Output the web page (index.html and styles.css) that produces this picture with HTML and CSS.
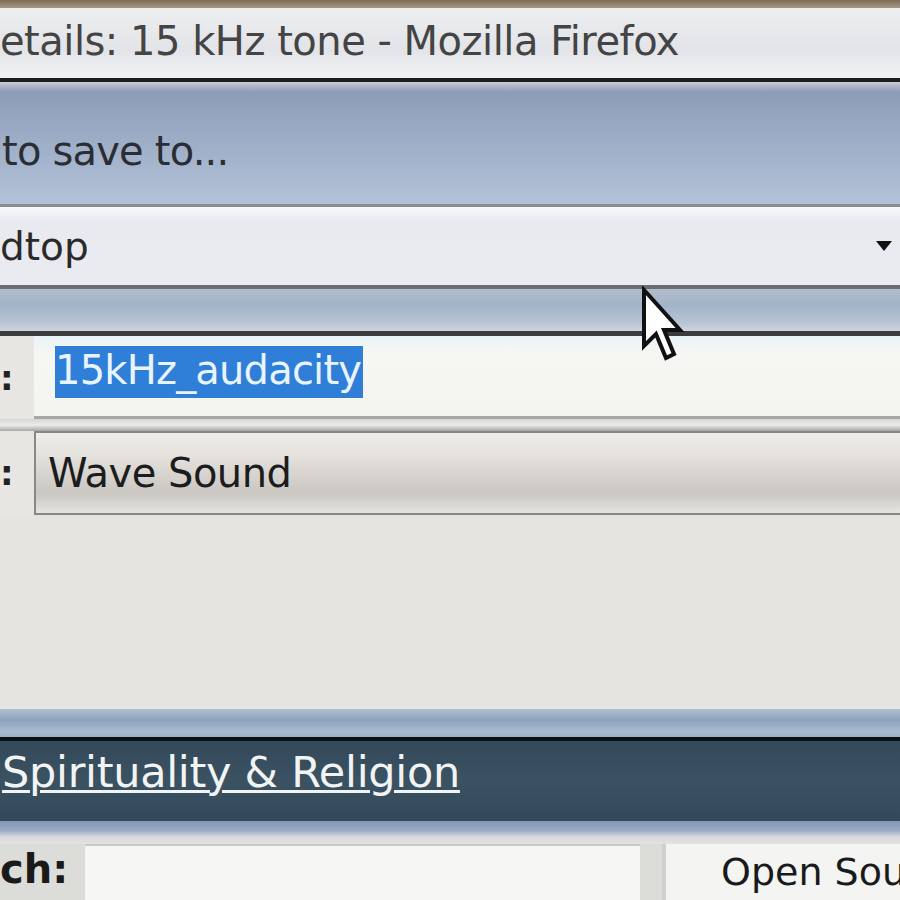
FILE: index.html
```html
<!DOCTYPE html>
<html lang="en">

<head>
    <meta charset="UTF-8">
    <meta name="viewport" content="width=device-width, initial-scale=1.0">
    <title>Save dialog</title>

    <link rel="stylesheet" href="styles.css">
</head>

<body>
    <div id="screen">
        <div class="top-edge"></div>

        <div class="titlebar">
            <span class="title">etails: 15 kHz tone - Mozilla Firefox</span>
        </div>

        <div class="banner">
            <span class="banner-text">to save to...</span>
        </div>

        <div class="folder">
            <span class="folder-name">dtop</span>
            <span class="drop-arrow"></span>
        </div>

        <div class="band"></div>

        <div class="row name-row">
            <span class="row-label">:</span>
            <div class="name-box">
                <span class="selected">15kHz_audacity</span>
            </div>
        </div>

        <div class="gap-band"></div>

        <div class="row type-row">
            <span class="row-label">:</span>
            <div class="type-box">Wave Sound</div>
        </div>

        <div class="empty-area"></div>

        <div class="band2"></div>

        <div class="nav">
            <a class="nav-link" href="#">Spirituality &amp; Religion</a>
        </div>

        <div class="band3"></div>

        <div class="search-row">
            <span class="search-label">ch:</span>
            <div class="search-box"></div>
            <div class="open-btn">Open Sou</div>
        </div>

        <!-- mouse pointer over the dialog -->
        <svg class="cursor" width="44" height="80" viewBox="0 0 11 20">
            <path d="M1 1 L1 15 L4 12 L6.5 18 L8.5 17 L6 11 L10 11 Z" fill="#fff" stroke="#111" stroke-width="1"/>
        </svg>
    </div>
</body>

</html>
```

FILE: styles.css
```css
* {
    margin: 0;
    padding: 0;
    box-sizing: border-box;
}

body {
    width: 900px;
    height: 900px;
    overflow: hidden;
    background: #e6e4e0;
    font-family: "DejaVu Sans", Tahoma, sans-serif;
}

#screen {
    position: relative;
    display: flex;
    flex-direction: column;
    height: 900px;
}

.top-edge {
    height: 8px;
    background: linear-gradient(#7d6d55, #a39888);
}

.titlebar {
    height: 74px;
    display: flex;
    align-items: center;
    padding-bottom: 4px;
    background: linear-gradient(#eceef0, #e2e4e8 60%, #f0f2f4);
    border-bottom: 4px solid #1e1e1e;
}

.title {
    font-size: 40px;
    color: #444;
    letter-spacing: -0.5px;
}

.banner {
    height: 125px;
    display: flex;
    align-items: center;
    padding-top: 16px;
    background: linear-gradient(#c9cdd6 0, #8d9cb8 8%, #9cacc6 45%, #b3c2d8 100%);
    border-bottom: 3px solid #8a8c90;
}

.banner-text {
    font-size: 40px;
    color: #2a2e34;
    margin-left: 2px;
    letter-spacing: -0.8px;
}

.folder {
    height: 82px;
    display: flex;
    align-items: center;
    justify-content: space-between;
    padding-right: 8px;
    background: linear-gradient(#f8f8fa, #e8eaf0 20%, #eaebf0);
    border-bottom: 4px solid #6a6c70;
}

.folder-name {
    font-size: 39px;
    color: #2a2a2a;
}

.drop-arrow {
    width: 0;
    height: 0;
    border-left: 8px solid transparent;
    border-right: 8px solid transparent;
    border-top: 10px solid #111;
}

.band {
    height: 47px;
    background: linear-gradient(#b0bccc, #a2b4c8 40%, #b8c4d4 80%, #cfd4dc);
    border-bottom: 5px solid #3c3c3e;
}

.row {
    display: flex;
    align-items: center;
}

.row-label {
    width: 34px;
    font-size: 34px;
    font-weight: bold;
    color: #222;
}

.name-row {
    height: 83px;
    background: #e8e6e2;
}

.name-box {
    flex: 1;
    height: 100%;
    display: flex;
    align-items: center;
    padding-left: 21px;
    padding-bottom: 8px;
    background: linear-gradient(#e8f4f8, #f6f6f2 20%, #f4f4f0);
    border-bottom: 3px solid #a8a8a6;
}

.selected {
    background: #2f7ed8;
    color: #e8f4ff;
    font-size: 40px;
    padding: 1px 2px 5px 0;
    letter-spacing: -0.8px;
}

.gap-band {
    height: 12px;
    background: linear-gradient(#d6d6d4, #ececea 50%, #a6a6a4);
}

.type-row {
    height: 84px;
    background: #e8e6e2;
}

.type-box {
    flex: 1;
    height: 100%;
    display: flex;
    align-items: center;
    padding-left: 12px;
    font-size: 40px;
    color: #1c1c1c;
    letter-spacing: -0.5px;
    background: linear-gradient(#f0eeea, #e4e0dc 30%, #cac6c2 75%, #e6e4e0);
    border: 2px solid #8a8884;
    border-right: none;
}

.empty-area {
    height: 194px;
    background: #e6e4e0;
}

.band2 {
    height: 32px;
    background: linear-gradient(#b2c0d0, #8ca2bc 40%, #a8bcd0 80%, #9cb0c4);
    border-bottom: 4px solid #0c1014;
}

.nav {
    height: 80px;
    display: flex;
    align-items: center;
    padding-bottom: 18px;
    background: linear-gradient(#34495a, #3a5262 50%, #33495a);
}

.nav-link {
    font-size: 43px;
    color: #f2f4f4;
    margin-left: 2px;
    letter-spacing: -0.3px;
    text-decoration: underline;
    text-decoration-thickness: 3px;
    text-underline-offset: 3px;
}

.band3 {
    height: 23px;
    background: linear-gradient(#8496b4, #9aaac4 40%, #d8dade 70%, #e2e2e0);
}

.search-row {
    flex: 1;
    display: flex;
    align-items: stretch;
    background: #dcdcd8;
}

.search-label {
    width: 85px;
    padding-top: 2px;
    font-size: 40px;
    font-weight: bold;
    color: #1a1a1a;
}

.search-box {
    width: 555px;
    background: #f6f6f4;
    border-top: 2px solid #c8c8c4;
}

.open-btn {
    flex: 1;
    margin-left: 22px;
    padding-left: 55px;
    padding-top: 6px;
    font-size: 38px;
    color: #1a1a1a;
    white-space: nowrap;
    overflow: hidden;
    background: #f4f4f2;
    border-left: 4px solid #d0d0cc;
}

.cursor {
    position: absolute;
    left: 640px;
    top: 286px;
}
```
